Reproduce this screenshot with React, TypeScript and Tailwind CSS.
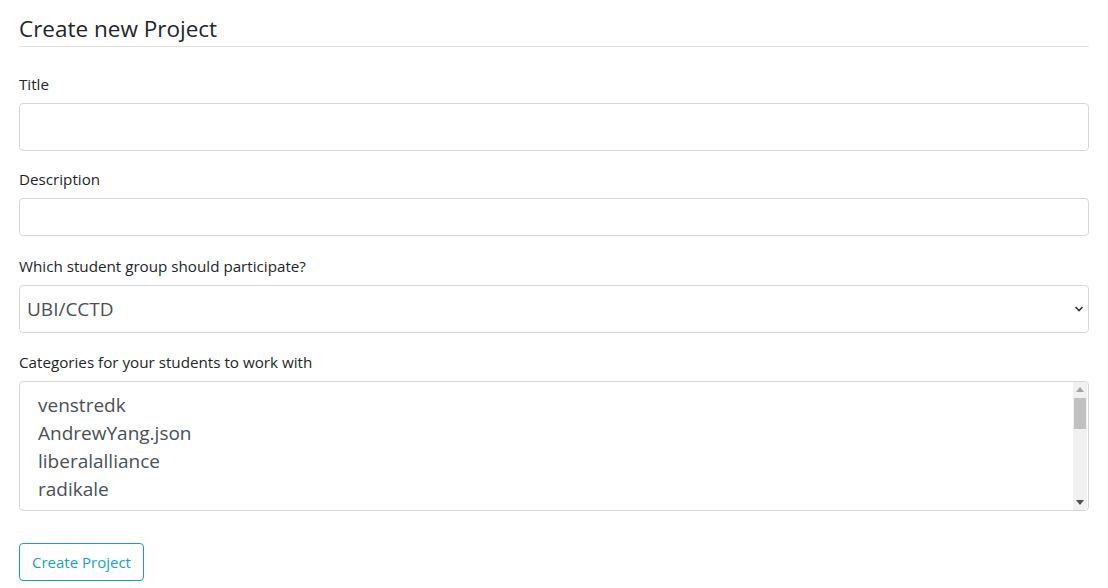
import React from "react";

const font = { fontFamily: '"Open Sans", "Noto Sans", sans-serif' };

export default function App() {
  const items = ["venstredk", "AndrewYang.json", "liberalalliance", "radikale", "socialdemokratiet"];
  return (
    <div className="w-[1108px] h-[588px] bg-white text-[#212529] overflow-hidden" style={font}>
      <div className="px-[19px] pt-[13px]">
        <h2 className="text-[22.5px] leading-[32px] pb-[1px] border-b border-[#e3e3e3] font-normal">Create new Project</h2>
        <div className="mt-[26px]">
          <label className="block text-[15.2px] leading-[22px] mb-[8px]">Title</label>
          <input className="block w-full h-[48px] border border-[#d4d8dd] rounded-[4px] outline-none" />
        </div>
        <div className="mt-[17px]">
          <label className="block text-[15.2px] leading-[22px] mb-[8px]">Description</label>
          <input className="block w-full h-[38px] border border-[#d4d8dd] rounded-[4px] outline-none" />
        </div>
        <div className="mt-[19px]">
          <label className="block text-[15.2px] leading-[22px] mb-[8px]">Which student group should participate?</label>
          <div className="relative h-[48px] border border-[#d4d8dd] rounded-[4px] flex items-center pl-[7px]">
            <span className="text-[19px] text-[#495057]">UBI/CCTD</span>
            <svg className="absolute right-[4px] top-[19px]" width="10" height="8" viewBox="0 0 10 8">
              <path d="M1.5 2 L5 5.5 L8.5 2" fill="none" stroke="#333" strokeWidth="1.6" />
            </svg>
          </div>
        </div>
        <div className="mt-[18px]">
          <label className="block text-[15.2px] leading-[22px] mb-[8px]">Categories for your students to work with</label>
          <div className="relative h-[130px] border border-[#d4d8dd] rounded-[4px] overflow-hidden">
            <div className="pl-[18px] pt-[9px]">
              {items.map((t) => (
                <div key={t} className="text-[19px] leading-[28px] text-[#495057]">{t}</div>
              ))}
            </div>
            <div className="absolute right-[1px] top-0 bottom-0 w-[14px] bg-[#f1f1f1] flex flex-col items-center">
              <svg className="mt-[5px]" width="8" height="5" viewBox="0 0 8 5"><path d="M0 5 L4 0 L8 5Z" fill="#a3a3a3" /></svg>
              <div className="mt-[6px] w-[12px] h-[31px] bg-[#c1c1c1]" />
              <div className="flex-1" />
              <svg className="mb-[5px]" width="8" height="5" viewBox="0 0 8 5"><path d="M0 0 L4 5 L8 0Z" fill="#505050" /></svg>
            </div>
          </div>
        </div>
        <button className="mt-[32px] h-[38px] px-[12px] border border-[#17a2b8] rounded-[4px] text-[#17a2b8] text-[15px] bg-white">Create Project</button>
      </div>
    </div>
  );
}
